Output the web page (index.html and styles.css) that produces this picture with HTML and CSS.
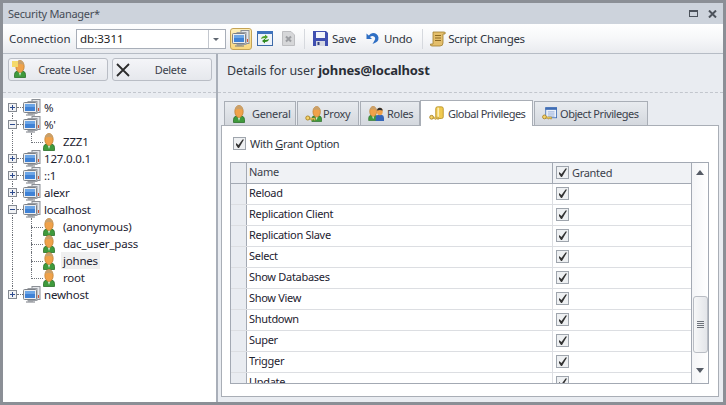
FILE: index.html
```html
<!DOCTYPE html>
<html lang="en">
<head>
  <meta charset="UTF-8">
  <meta name="viewport" content="width=device-width, initial-scale=1.0">
  <title>Security Manager</title>
  <link rel="stylesheet" href="styles.css">
</head>
<body>

  <!-- Shared icons -->
  <svg class="defs" width="0" height="0">
    <defs>
      <symbol id="i-host" viewBox="0 0 18 17">
        <rect x="9" y="0.500" width="8" height="13" fill="#e4e6ea" stroke="#8c9096"/>
        <rect x="5" y="2.500" width="9" height="12" fill="#dfe1e5" stroke="#9a9ea4"/>
        <rect x="0.500" y="3.500" width="13" height="10" rx="1" fill="#eceef1" stroke="#7d8187"/>
        <rect x="2" y="5" width="10" height="7" fill="#3f82d6"/>
        <rect x="2" y="5" width="10" height="3" fill="#6da6e6"/>
        <rect x="5" y="14" width="5" height="1.500" fill="#9a9ea4"/>
        <rect x="3" y="15.500" width="9" height="1" fill="#777b81"/>
        <rect x="15" y="9" width="1" height="3" fill="#d2553a"/>
      </symbol>
      <symbol id="i-user" viewBox="0 0 12 18">
        <path d="M0.500 17.500V14.500Q0.500 11.500 3.500 11H8.500Q11.500 11.500 11.500 14.500V17.500Z" fill="#3f9a3c" stroke="#2b6e2a" stroke-width="0.800"/>
        <path d="M4.500 11L6 16L7.500 11Z" fill="#e8f4e8"/>
        <ellipse cx="6" cy="6.500" rx="4.200" ry="6" fill="#f0a24a" stroke="#b97a2c" stroke-width="0.700"/>
        <path d="M2 5Q2.500 0.500 6 0.500Q9.500 0.500 10 5Q6 3 2 5Z" fill="#c9a06a"/>
      </symbol>
      <symbol id="i-key" viewBox="0 0 12 8">
        <circle cx="3" cy="3.500" r="2.300" fill="#f3d36b" stroke="#a8801f"/>
        <path d="M5 3.500H11.500V6H10V5H8.500V6H7V5H5Z" fill="#f3d36b" stroke="#a8801f" stroke-width="0.600"/>
      </symbol>
      <symbol id="i-check" viewBox="0 0 13 13">
        <rect x="0.500" y="0.500" width="12" height="12" fill="#eef0f2" stroke="#9fa5ad"/>
        <path d="M3 6L5.500 8L9.500 2.500H11L6 11H5L3 8Z" fill="#333333"/>
      </symbol>
      <symbol id="i-plus" viewBox="0 0 9 9">
        <rect x="0.500" y="0.500" width="8" height="8" fill="#f1f2f4" stroke="#858a92"/>
        <path d="M2 4.500H7M4.500 2V7" stroke="#2d4b8e"/>
      </symbol>
      <symbol id="i-minus" viewBox="0 0 9 9">
        <rect x="0.500" y="0.500" width="8" height="8" fill="#f1f2f4" stroke="#858a92"/>
        <path d="M2 4.500H7" stroke="#2d4b8e"/>
      </symbol>
    </defs>
  </svg>

  <div class="window">
    <div class="titlebar">
      <span class="title">Security Manager*</span>
      <svg class="title-btn" width="9" height="7" viewBox="0 0 9 7"><rect x="0.500" y="1" width="8" height="5.500" fill="none" stroke="#4c525b"/><rect x="0" y="0" width="9" height="2" fill="#4c525b"/></svg>
      <svg class="title-btn" width="9" height="8" viewBox="0 0 9 8"><path d="M1 0.500L8 7.500M8 0.500L1 7.500" stroke="#4c525b" stroke-width="2"/></svg>
    </div>

    <div class="toolbar">
      <span class="conn-label">Connection</span>
      <div class="combo">
        <span class="combo-value">db:3311</span>
        <span class="combo-arrow"></span>
      </div>
      <button class="tool tool-on">
        <svg width="18" height="17" viewBox="0 0 18 17"><use href="#i-host"/></svg>
      </button>
      <button class="tool tool-sync">
        <svg width="16" height="15" viewBox="0 0 16 15">
          <rect x="0.500" y="0.500" width="15" height="14" fill="#eef3fa" stroke="#3d6aa8"/>
          <rect x="0" y="0" width="16" height="3" fill="#3f73bd"/>
          <path d="M4 8Q4.500 5 8 5V3.500L11 6L8 8.500V7Q6 7 4 8Z" fill="#4fa32c"/>
          <path d="M12 8Q11.500 11 8 11V12.500L5 10L8 7.500V9Q10 9 12 8Z" fill="#2f8a1e"/>
        </svg>
      </button>
      <button class="tool tool-off">
        <svg width="13" height="15" viewBox="0 0 13 15">
          <path d="M0.500 0.500H9L12.500 4V14.500H0.500Z" fill="#d6d7d9" stroke="#bdbec1"/>
          <path d="M4 5.500L9 10.500M9 5.500L4 10.500" stroke="#9b9da1" stroke-width="2"/>
        </svg>
      </button>
      <span class="tool-sep"></span>
      <button class="tool tool-text tool-save">
        <svg width="15" height="15" viewBox="0 0 15 15">
          <path d="M0 0H13L15 2V15H0Z" fill="#3f4fb0"/>
          <rect x="3" y="1" width="9" height="6" fill="#f2f4fa"/>
          <rect x="3" y="10" width="9" height="5" fill="#d5d8e2"/>
          <rect x="4.500" y="11" width="2" height="3" fill="#33407f"/>
        </svg>
        Save
      </button>
      <button class="tool tool-text tool-undo">
        <svg width="13" height="13" viewBox="0 0 13 13">
          <path d="M0.500 1.500V7H6L4 5Q6 3.500 8 4.500Q10 6 8.500 8.500L6.500 12Q13 10 12.500 5.500Q11.500 1 7 1Q4.500 1 2.800 3.500Z" fill="#2f6fc4"/>
        </svg>
        Undo
      </button>
      <span class="tool-sep tool-sep-b"></span>
      <button class="tool tool-text tool-script">
        <svg width="16" height="16" viewBox="0 0 16 16">
          <path d="M3 1H14Q16 1 15 3H13V12Q13 15 10 15H2Q0 15 0.500 13H3Z" fill="#e4bf6c" stroke="#a07d2e" stroke-width="0.800"/>
          <path d="M5 4.500H11M5 7H11M5 9.500H11" stroke="#8c6a22"/>
        </svg>
        Script Changes
      </button>
    </div>

    <div class="main">
      <div class="left">
        <div class="left-actions">
          <button class="action">
            <svg class="action-icon" width="15" height="19" viewBox="0 0 15 19">
              <use href="#i-user" x="2" y="0" width="12" height="18"/>
              <rect x="0" y="1" width="6" height="6" fill="#f4d96b"/>
            </svg>
            <span class="action-label">Create User</span>
          </button>
          <button class="action">
            <svg class="action-icon" width="14" height="14" viewBox="0 0 14 14"><path d="M1 1L13 13M13 1L1 13" stroke="#2c2c2c" stroke-width="1.800"/></svg>
            <span class="action-label">Delete</span>
          </button>
        </div>

        <div class="tree">
          <div class="node"><span class="rail"></span><svg class="toggle"><use href="#i-plus"/></svg><span class="stub"></span><svg class="host"><use href="#i-host"/></svg><span class="node-text">%</span></div>
          <div class="node"><span class="rail"></span><svg class="toggle"><use href="#i-minus"/></svg><span class="stub"></span><svg class="host"><use href="#i-host"/></svg><span class="node-text">%'</span></div>
          <div class="node node-user last-child"><span class="rail"></span><span class="branch"></span><svg class="user"><use href="#i-user"/></svg><span class="node-text">ZZZ1</span></div>
          <div class="node"><span class="rail"></span><svg class="toggle"><use href="#i-plus"/></svg><span class="stub"></span><svg class="host"><use href="#i-host"/></svg><span class="node-text">127.0.0.1</span></div>
          <div class="node"><span class="rail"></span><svg class="toggle"><use href="#i-plus"/></svg><span class="stub"></span><svg class="host"><use href="#i-host"/></svg><span class="node-text">::1</span></div>
          <div class="node"><span class="rail"></span><svg class="toggle"><use href="#i-plus"/></svg><span class="stub"></span><svg class="host"><use href="#i-host"/></svg><span class="node-text">alexr</span></div>
          <div class="node"><span class="rail"></span><svg class="toggle"><use href="#i-minus"/></svg><span class="stub"></span><svg class="host"><use href="#i-host"/></svg><span class="node-text">localhost</span></div>
          <div class="node node-user"><span class="rail"></span><span class="branch"></span><svg class="user"><use href="#i-user"/></svg><span class="node-text">(anonymous)</span></div>
          <div class="node node-user"><span class="rail"></span><span class="branch"></span><svg class="user"><use href="#i-user"/></svg><span class="node-text">dac_user_pass</span></div>
          <div class="node node-user"><span class="rail"></span><span class="branch"></span><svg class="user"><use href="#i-user"/></svg><span class="node-text selected">johnes</span></div>
          <div class="node node-user last-child"><span class="rail"></span><span class="branch"></span><svg class="user"><use href="#i-user"/></svg><span class="node-text">root</span></div>
          <div class="node last-root"><span class="rail"></span><svg class="toggle"><use href="#i-plus"/></svg><span class="stub"></span><svg class="host"><use href="#i-host"/></svg><span class="node-text">newhost</span></div>
        </div>
      </div>

      <div class="right">
        <div class="details">Details for user <b>johnes@localhost</b></div>

        <div class="tabs">
          <div class="tab tab-general"><svg width="12" height="18"><use href="#i-user"/></svg>General</div>
          <div class="tab tab-proxy">
            <svg width="18" height="16" viewBox="0 0 20 18"><use href="#i-user" x="7" width="12" height="18"/><use href="#i-key" x="0" y="10" width="12" height="8"/></svg>Proxy
          </div>
          <div class="tab tab-roles">
            <svg width="17" height="15" viewBox="0 0 20 18"><use href="#i-user" width="12" height="18"/><path d="M9 18V14Q9 11 12 10.500H16Q19 11 19 14V18Z" fill="#3565b8"/><ellipse cx="14" cy="6.500" rx="3.500" ry="4.500" fill="#f0a24a"/><path d="M10.500 5.500Q11 2 14 2Q17 2 17.500 5.500Q14 4 10.500 5.500Z" fill="#2d2d2d"/></svg>Roles
          </div>
          <div class="tab tab-active">
            <svg width="16" height="15" viewBox="0 0 19 18"><rect x="8" y="1" width="9" height="14" rx="2" fill="#f0c94f" stroke="#b48e24"/><rect x="10" y="2" width="2" height="12" fill="#fbeeb5"/><use href="#i-key" x="0" y="10" width="12" height="8"/></svg>Global Privileges
          </div>
          <div class="tab tab-object">
            <svg width="15" height="14" viewBox="0 0 18 16"><rect x="4.500" y="0.500" width="13" height="12" fill="#eef2fa" stroke="#3f6db5"/><rect x="4" y="0" width="14" height="3" fill="#3f6db5"/><path d="M7 5.500H15M7 8H15M7 10.500H15" stroke="#7c9bd0"/><use href="#i-key" x="0" y="8" width="12" height="8"/></svg>Object Privileges
          </div>
        </div>

        <div class="tab-page">
          <label class="grant">
            <svg width="13" height="13"><use href="#i-check"/></svg>
            <span>With <u>G</u>rant Option</span>
          </label>

          <div class="grid">
            <div class="grid-body">
              <div class="row row-head">
                <div class="indicator"></div>
                <div class="cell-name">Name</div>
                <div class="cell-granted"><svg width="13" height="13"><use href="#i-check"/></svg><span>Granted</span></div>
              </div>
              <div class="row"><div class="indicator"></div><div class="cell-name">Reload</div><div class="cell-granted"><svg width="13" height="13"><use href="#i-check"/></svg></div></div>
              <div class="row"><div class="indicator"></div><div class="cell-name">Replication Client</div><div class="cell-granted"><svg width="13" height="13"><use href="#i-check"/></svg></div></div>
              <div class="row"><div class="indicator"></div><div class="cell-name">Replication Slave</div><div class="cell-granted"><svg width="13" height="13"><use href="#i-check"/></svg></div></div>
              <div class="row"><div class="indicator"></div><div class="cell-name">Select</div><div class="cell-granted"><svg width="13" height="13"><use href="#i-check"/></svg></div></div>
              <div class="row"><div class="indicator"></div><div class="cell-name">Show Databases</div><div class="cell-granted"><svg width="13" height="13"><use href="#i-check"/></svg></div></div>
              <div class="row"><div class="indicator"></div><div class="cell-name">Show View</div><div class="cell-granted"><svg width="13" height="13"><use href="#i-check"/></svg></div></div>
              <div class="row"><div class="indicator"></div><div class="cell-name">Shutdown</div><div class="cell-granted"><svg width="13" height="13"><use href="#i-check"/></svg></div></div>
              <div class="row"><div class="indicator"></div><div class="cell-name">Super</div><div class="cell-granted"><svg width="13" height="13"><use href="#i-check"/></svg></div></div>
              <div class="row"><div class="indicator"></div><div class="cell-name">Trigger</div><div class="cell-granted"><svg width="13" height="13"><use href="#i-check"/></svg></div></div>
              <div class="row"><div class="indicator"></div><div class="cell-name">Update</div><div class="cell-granted"><svg width="13" height="13"><use href="#i-check"/></svg></div></div>
            </div>
            <div class="scrollbar">
              <span class="arrow-up"></span>
              <span class="scroll-track"></span>
              <div class="scroll-thumb"><span class="grip"></span></div>
              <span class="arrow-down"></span>
            </div>
          </div>
        </div>
      </div>
    </div>
  </div>

</body>
</html>
```

FILE: styles.css
```css
/* General Styles */
html, body {
  margin: 0;
  padding: 0;
  height: 100%;
  overflow: hidden;
}

body {
  font-family: 'Noto Sans', 'Open Sans', sans-serif;
  font-size: 11px;
  letter-spacing: -0.3px;
  color: #2f3540;
}

button {
  font: inherit;
  letter-spacing: inherit;
  color: inherit;
  background: none;
  border: none;
  padding: 0;
}

svg {
  display: block;
  flex: none;
}

.defs {
  position: absolute;
}

.window {
  box-sizing: border-box;
  width: 726px;
  height: 405px;
  border: 3px solid #8b8f96;
  display: flex;
  flex-direction: column;
  background: #e9ecf1;
}

/* Title bar */
.titlebar {
  height: 21px;
  background: #cdd3dc;
  display: flex;
  align-items: center;
  gap: 10px;
  padding: 0 6px 0 5px;
}

.title {
  flex: 1;
  color: #464c56;
}

/* Toolbar */
.toolbar {
  box-sizing: border-box;
  height: 30px;
  flex: none;
  display: flex;
  align-items: center;
  background: linear-gradient(#ffffff, #f6f7f9 50%, #e9ebef);
  border-bottom: 1px solid #b6bcc5;
  padding-left: 6px;
}

.conn-label {
  width: 67px;
  font-size: 11.5px;
  letter-spacing: 0;
}

.combo {
  box-sizing: border-box;
  width: 150px;
  height: 20px;
  background: #fff;
  border: 1px solid #a8aeb8;
  display: flex;
  align-items: center;
}

.combo-value {
  flex: 1;
  padding-left: 3px;
  font-size: 11.5px;
  letter-spacing: 0;
  color: #1c1c1c;
}

.combo-arrow {
  width: 16px;
  height: 18px;
  border-left: 1px solid #c3c7ce;
  position: relative;
}

.combo-arrow::after {
  content: "";
  position: absolute;
  left: 4px;
  top: 8px;
  border: 3.5px solid transparent;
  border-top: 3.5px solid #5f6670;
}

.tool {
  display: flex;
  align-items: center;
  gap: 4px;
  font-size: 11.5px;
}

.tool-on {
  box-sizing: border-box;
  width: 22px;
  height: 22px;
  margin-left: 4px;
  justify-content: center;
  background: linear-gradient(#fdeeb8, #f9d77e);
  border: 1px solid #c5a355;
  border-radius: 3px;
}

.tool-sync {
  margin-left: 5px;
}

.tool-off {
  margin-left: 9px;
}

.tool-sep {
  width: 1px;
  height: 20px;
  background: #d6d9de;
  margin-left: 9px;
}

.tool-save {
  margin-left: 8px;
}

.tool-undo {
  margin-left: 10px;
  gap: 5px;
}

.tool-sep-b {
  margin-left: 10px;
}

.tool-script {
  margin-left: 7px;
  gap: 2px;
}

/* Main split */
.main {
  flex: 1;
  display: flex;
  min-height: 0;
}

.left {
  width: 213px;
  flex: none;
  display: flex;
  flex-direction: column;
  border-right: 2px solid #a9afb9;
}

.left-actions {
  height: 39px;
  flex: none;
  box-sizing: border-box;
  padding: 4px 4px 0 5px;
  display: flex;
  gap: 4px;
  border-bottom: 1px dashed #c2c6cd;
  margin-bottom: 5px;
}

.action {
  box-sizing: border-box;
  width: 100px;
  height: 23px;
  display: flex;
  align-items: center;
  padding-left: 3px;
  background: linear-gradient(#f4f5f8, #e6e8ed);
  border: 1px solid #b9bdc5;
  border-radius: 3px;
  color: #3b414b;
}

.action-label {
  flex: 1;
  text-align: center;
}

/* Tree */
.tree {
  flex: 1;
  background: #fff;
  padding-top: 1px;
  color: #1d2230;
}

.node {
  height: 17px;
  display: flex;
  align-items: center;
  position: relative;
  font-size: 11.5px;
  letter-spacing: -0.2px;
}

.rail {
  position: absolute;
  left: 9px;
  top: 0;
  bottom: 0;
  border-left: 1px dotted #6f737a;
}

.tree .node:first-child .rail {
  top: 8px;
}

.last-root .rail {
  bottom: 8px;
}

.toggle {
  width: 9px;
  height: 9px;
  margin-left: 5px;
  position: relative;
}

.stub {
  width: 6px;
  border-top: 1px dotted #6f737a;
}

.host {
  width: 18px;
  height: 17px;
  margin-right: 1px;
}

.branch {
  width: 11px;
  height: 9px;
  margin: 0 0 8px 28px;
  border-left: 1px dotted #6f737a;
  border-bottom: 1px dotted #6f737a;
  flex: none;
}

.user {
  width: 12px;
  height: 18px;
  margin-right: 7px;
}

.node-user:not(.last-child)::after {
  content: "";
  position: absolute;
  left: 28px;
  top: 8px;
  bottom: 0;
  border-left: 1px dotted #6f737a;
}

.node-text {
  padding: 0 2px;
  line-height: 17px;
}

.node-user .node-text {
  margin-left: -1px;
}

.selected {
  background: #f0f0f0;
}

/* Right side */
.right {
  flex: 1;
  min-width: 0;
  display: flex;
  flex-direction: column;
}

.details {
  box-sizing: border-box;
  height: 39px;
  flex: none;
  padding: 7px 0 0 9px;
  font-size: 12.5px;
  letter-spacing: -0.1px;
  border-bottom: 1px dashed #c2c6cd;
  color: #343a45;
}

.details b {
  font-size: 13px;
  letter-spacing: -0.15px;
  color: #2a2e36;
}

.tabs {
  height: 32px;
  flex: none;
  display: flex;
  align-items: flex-end;
  padding-left: 6px;
}

.tab {
  box-sizing: border-box;
  height: 24px;
  display: flex;
  align-items: center;
  white-space: nowrap;
  border: 1px solid #a9aeb6;
  border-bottom: none;
  background: linear-gradient(#e8ebef, #d4d8de);
  margin-right: 1px;
  color: #3b414b;
}

.tab-general {
  width: 72px;
  gap: 7px;
  padding-left: 8px;
}

.tab-proxy {
  width: 62px;
  padding-left: 7px;
}

.tab-roles {
  width: 60px;
  gap: 2px;
  margin-right: 0;
  padding-left: 7px;
}

.tab-active {
  width: 113px;
  height: 26px;
  gap: 3px;
  background: #fff;
  margin: 0 0 -1px;
  position: relative;
  padding-left: 8px;
  letter-spacing: -0.5px;
}

.tab-object {
  width: 114px;
  gap: 3px;
  margin: 0 0 0 1px;
  padding-left: 7px;
  letter-spacing: -0.45px;
}

.tab-page {
  box-sizing: border-box;
  width: 498px;
  flex: 1;
  min-height: 0;
  margin: 0 0 5px 3px;
  background: #fff;
  border: 1px solid #a9aeb6;
  padding: 11px 8px 0 8px;
}

.grant {
  display: flex;
  align-items: center;
  gap: 4px;
  height: 13px;
  margin: 0 0 12px 3px;
  color: #2f3540;
}

/* Grid */
.grid {
  box-sizing: border-box;
  height: 222px;
  width: 479px;
  display: flex;
  border: 1px solid #a3a9b3;
  overflow: hidden;
  position: relative;
}

.grid-body {
  flex: 1;
  min-width: 0;
}

.row {
  box-sizing: border-box;
  height: 21px;
  display: flex;
  border-bottom: 1px solid #dcdee2;
  color: #1d2230;
}

.row-head {
  background: #f0f2f5;
  border-bottom: 1px solid #a3a9b3;
  color: #3b414b;
}

.indicator {
  box-sizing: border-box;
  width: 16px;
  background: #e9ecf1;
  border-right: 1px solid #a3a9b3;
}

.cell-name {
  flex: 1;
  padding-left: 2px;
  line-height: 17px;
}

.cell-granted {
  box-sizing: border-box;
  width: 139px;
  display: flex;
  align-items: center;
  gap: 3px;
  padding-left: 3px;
  padding-bottom: 1px;
  border-left: 1px solid #dcdee2;
}

.row-head .cell-granted {
  border-left-color: #a3a9b3;
}

/* Scrollbar */
.scrollbar {
  box-sizing: border-box;
  width: 17px;
  flex: none;
  display: flex;
  flex-direction: column;
  align-items: center;
  background: linear-gradient(90deg, #f4f5f7, #ffffff);
  border-left: 1px solid #a3a9b3;
  padding: 7px 0 6px;
}

.arrow-up {
  border: 4.5px solid transparent;
  border-top: none;
  border-bottom: 5px solid #555b65;
}

.arrow-down {
  border: 4.5px solid transparent;
  border-bottom: none;
  border-top: 5px solid #555b65;
}

.scroll-track {
  height: 121px;
  flex: none;
}

.scroll-thumb {
  box-sizing: border-box;
  width: 15px;
  height: 57px;
  flex: none;
  margin-bottom: 15px;
  background: linear-gradient(90deg, #f6f7f8, #e3e5e9);
  border: 1px solid #b9bdc4;
  border-radius: 3px;
  display: flex;
  align-items: center;
  justify-content: center;
}

.grip {
  width: 7px;
  height: 7px;
  background: repeating-linear-gradient(#6d727a 0 1px, transparent 1px 2px);
}
```
